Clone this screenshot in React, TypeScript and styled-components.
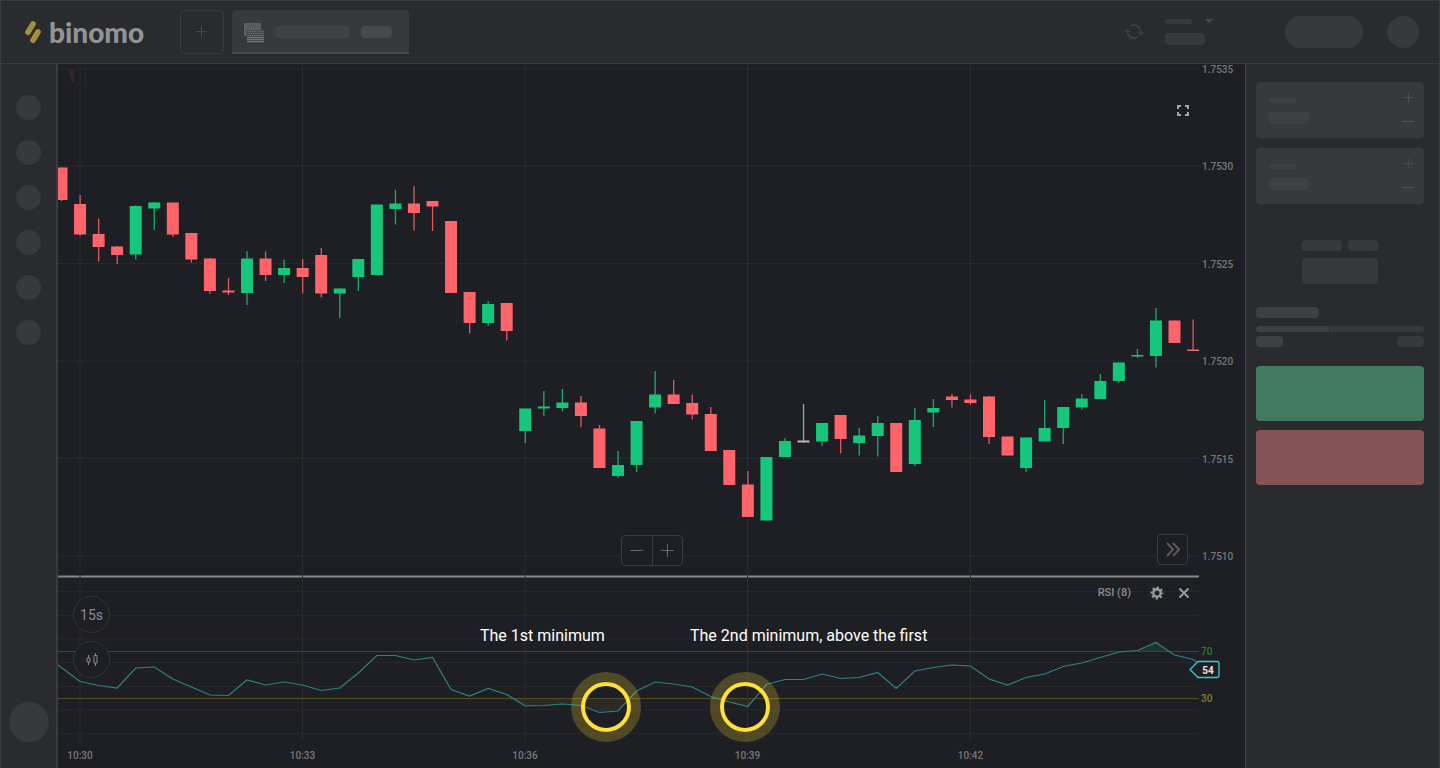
import React from "react";
import styled, { createGlobalStyle } from "styled-components";

const GlobalStyle = createGlobalStyle`
  * { box-sizing: border-box; }
  body { margin: 0; background: #2a2b2f; font-family: Roboto, sans-serif; color: #8b8c90; }
  button { font: inherit; color: inherit; padding: 0; cursor: pointer; }
`;

const line = "#3a3b3e";

const Page = styled.div`
  min-height: 100vh;
  display: flex;
  flex-direction: column;
`;

const Header = styled.header`
  height: 64px;
  flex: none;
  display: flex;
  align-items: center;
  padding: 0 20px 0 24px;
  border: 1px solid ${line};
`;

const Logo = styled.a`
  display: flex;
  align-items: center;
  gap: 8px;
  width: 155px;
  color: #929397;
  text-decoration: none;
  font: 900 28px/32px Lato, sans-serif;
`;

const AddButton = styled.button`
  width: 44px;
  height: 44px;
  display: grid;
  place-items: center;
  background: none;
  border: 1px solid ${line};
  border-radius: 4px;
`;

const AssetTab = styled.button`
  width: 177px;
  height: 44px;
  margin-left: 8px;
  padding: 2px 16px 0 11px;
  display: flex;
  align-items: center;
  background: #38393d;
  border: 0;
  border-bottom: 2px solid #4a4b4f;
  border-radius: 4px 4px 0 0;
`;

const Bar = styled.span<{ w: number; h: number; tone?: string }>`
  display: block;
  width: ${(p) => p.w}px;
  height: ${(p) => p.h}px;
  border-radius: 4px;
  background: ${(p) => p.tone ?? "#38393c"};
`;

const TabBar = styled(Bar)`
  margin-left: 11px;
`;

const HeaderTools = styled.div`
  display: flex;
  align-items: center;
  margin-left: auto;
`;

const PlainButton = styled.button`
  display: grid;
  place-items: center;
  background: none;
  border: 0;
`;

const Account = styled.button`
  display: grid;
  grid-template-columns: 40px 8px;
  gap: 9px 0;
  margin: 0 72px 0 21px;
  background: none;
  border: 0;
`;

const Deposit = styled.button`
  width: 78px;
  height: 32px;
  border: 0;
  border-radius: 16px;
  background: #38393c;
`;

const Avatar = styled.button`
  width: 32px;
  height: 32px;
  margin-left: 24px;
  border: 0;
  border-radius: 50%;
  background: #38393c;
`;

const Body = styled.div`
  flex: 1;
  display: flex;
`;

const Sidebar = styled.nav`
  width: 58px;
  flex: none;
  display: flex;
  flex-direction: column;
  align-items: center;
  gap: 20px;
  padding: 31px 0 26px;
  border-left: 1px solid ${line};
  border-right: 2px solid ${line};
`;

const Dot = styled.button<{ size: number }>`
  width: ${(p) => p.size}px;
  height: ${(p) => p.size}px;
  border: 0;
  border-radius: 50%;
  background: #38393d;
  &:last-child { margin-top: auto; }
`;

const ChartArea = styled.main`
  flex: 1;
  min-width: 0;
  background: #1e1f24;
`;

const ChartBox = styled.div`
  position: relative;
`;

const ChartSvg = styled.svg`
  display: block;
  width: 100%;
  height: auto;
  font-family: Roboto, sans-serif;
`;

const TopTools = styled.div`
  position: absolute;
  top: 40px;
  right: 47px;
  width: 30px;
  display: flex;
  justify-content: center;
`;

const ZoomGroup = styled.div`
  position: absolute;
  left: 50%;
  bottom: 202px;
  display: flex;
  transform: translateX(-50%);
  border: 1px solid ${line};
  border-radius: 4px;
  background: #1e1f24;
`;

const ZoomButton = styled(PlainButton)`
  width: 30px;
  height: 29px;
  & + & { border-left: 1px solid ${line}; }
`;

const SkipButton = styled(PlainButton)`
  position: absolute;
  right: 57px;
  bottom: 203px;
  width: 31px;
  height: 31px;
  border: 1px solid ${line};
  border-radius: 4px;
  background: #1e1f24;
`;

const IndicatorHead = styled.div`
  position: absolute;
  right: 53px;
  bottom: 167px;
  display: flex;
  align-items: center;
  font-size: 11px;
  font-weight: 500;
  line-height: 16px;
`;

const IndicatorButton = styled(PlainButton)`
  width: 16px;
  height: 16px;
  margin-left: 18px;
  & + & { margin-left: 11px; }
`;

const RoundTools = styled.div`
  position: absolute;
  left: 15px;
  bottom: 90px;
  display: grid;
  gap: 8px;
`;

const RoundButton = styled(PlainButton)`
  width: 37px;
  height: 37px;
  border: 1px solid #333438;
  border-radius: 50%;
  background: #1e1f24;
  font-size: 14px;
`;

const Panel = styled.aside`
  width: 195px;
  flex: none;
  display: flex;
  flex-direction: column;
  padding: 18px 15px 18px 10px;
  border-left: 1px solid #434447;
  border-right: 1px solid ${line};
`;

const Card = styled.div`
  height: 56px;
  display: flex;
  justify-content: space-between;
  padding: 9px 9px 10px 13px;
  margin-bottom: 10px;
  border-radius: 4px;
  background: #38393c;
`;

const CardText = styled.div`
  display: grid;
  align-content: center;
  gap: 9px;
  padding-top: 3px;
`;

const Stepper = styled.div`
  display: flex;
  flex-direction: column;
  justify-content: space-between;
`;

const Payout = styled.div`
  display: grid;
  grid-template-columns: 40px 30px;
  gap: 7px 6px;
  justify-content: center;
  margin: 26px 0 23px;
  & > :last-child { grid-column: span 2; }
`;

const Mood = styled.div`
  display: grid;
  gap: 4px 1px;
  grid-template-columns: 73fr 94fr;
  margin: 8px 0 19px;
`;

const MoodPart = styled.span<{ right?: boolean }>`
  height: 6px;
  background: ${(p) => (p.right ? "#38393c" : "#3f4043")};
  border-radius: ${(p) => (p.right ? "0 3px 3px 0" : "3px 0 0 3px")};
`;

const MoodValue = styled(Bar)`
  &:last-child { justify-self: end; }
`;

const TradeButton = styled.button<{ tone: string }>`
  height: 55px;
  margin-bottom: 9px;
  border: 0;
  border-radius: 4px;
  background: ${(p) => p.tone};
`;

const GREEN = "#16c67a";
const RED = "#ff646b";
const GREY = "#b5b6b9";

// Each candle: colour, wick top, body top, body bottom, wick bottom.
type Candle = [string, number, number, number, number];
const candles: Candle[] = [
  [RED, 167.5, 167.5, 200, 201], [RED, 195, 204, 234.5, 235.5], [RED, 218.5, 234, 247, 261.5],
  [RED, 246, 246.5, 255, 264], [GREEN, 205.5, 206, 254.5, 259.5], [GREEN, 202, 202.5, 208.5, 230],
  [RED, 202.5, 202.5, 234.5, 237], [RED, 233, 233, 259.5, 262.5], [RED, 258, 258.5, 291, 294],
  [RED, 278, 290.5, 292.5, 295], [GREEN, 251, 258.5, 293, 305], [RED, 251.5, 258.5, 275, 281],
  [GREEN, 259.5, 268, 275, 283], [RED, 259, 268, 277, 293.5], [RED, 248, 255, 293.5, 297.5],
  [GREEN, 288.5, 288.5, 293.5, 318], [GREEN, 259, 259, 277, 291], [GREEN, 204.5, 204.5, 275, 275],
  [GREEN, 190, 203.5, 209, 224.5], [RED, 186, 203.5, 213, 230.5], [RED, 201, 201, 206.5, 231],
  [RED, 221, 221, 293, 293], [RED, 292, 292, 323, 333.5], [GREEN, 301, 304, 323, 326],
  [RED, 303, 303, 331, 340.5], [GREEN, 408.5, 408.5, 431, 443], [GREEN, 391, 406.5, 408.5, 416],
  [GREEN, 389, 402.5, 408, 411.5], [RED, 396, 402.5, 416, 427], [RED, 425, 428.5, 468, 468],
  [GREEN, 451, 465, 476, 478], [GREEN, 421, 421, 465, 472], [GREEN, 371, 394.5, 407.5, 413.5],
  [RED, 380, 394.5, 404, 404], [RED, 394.5, 403, 414.5, 419.5], [RED, 407, 414, 451, 451],
  [RED, 450, 450, 485, 485], [RED, 471, 484.5, 517, 517], [GREEN, 457, 457, 520.5, 520.5],
  [GREEN, 438, 441, 457, 457], [GREY, 404, 440.5, 442.5, 442.5], [GREEN, 423, 423, 441.5, 446],
  [RED, 415, 415, 439, 453.5], [GREEN, 428, 435.5, 443, 455.5], [GREEN, 416, 423, 436, 456.5],
  [RED, 423, 423, 472, 472], [GREEN, 408, 420, 464, 466], [GREEN, 399, 408, 412.5, 427],
  [RED, 394, 396.5, 400, 407.5], [RED, 394.5, 399.5, 403, 405], [RED, 396, 396.5, 437, 444],
  [RED, 436.5, 436.5, 455.5, 455.5], [GREEN, 437.5, 437.5, 468, 472], [GREEN, 400, 428, 441.5, 441.5],
  [GREEN, 407, 407, 428, 444], [GREEN, 394, 398.5, 407.5, 409.5], [GREEN, 374, 381, 399, 399],
  [GREEN, 362.5, 362.5, 381, 383], [GREEN, 349, 355, 356.5, 358], [GREEN, 308, 320.5, 356, 367.5],
  [RED, 320.5, 320.5, 343, 343], [RED, 319.5, 349.5, 351, 351],
];

const rsi = [
  668, 681.5, 685.5, 688, 668, 667, 679, 687, 695, 695.5, 680, 685, 682, 685, 690.5, 688, 673, 655.5,
  655.5, 660, 657.5, 689.5, 696, 688.5, 694.5, 706, 705.5, 704, 705.5, 712.5, 711, 691, 682, 684, 687,
  696.5, 702, 706.5, 684.5, 679.5, 679.5, 674, 678.5, 677.5, 672.5, 688.5, 671, 667.5, 665, 666, 679,
  685, 677.5, 674, 666.5, 663, 657.5, 652, 650.5, 642.5, 655, 659.5,
];

const STEP = 18.55;
const slot = (i: number) => 61.5 + i * STEP;

const prices: [string, number][] = [
  ["1.7535", 69], ["1.7530", 166], ["1.7525", 263.5], ["1.7520", 361], ["1.7515", 458.5], ["1.7510", 556],
];
const rsiGrid = [591.5, 615.5, 639, 662.5, 686.5, 710, 733.5];
const times: [string, number][] = [
  ["10:30", 80], ["10:33", 302.5], ["10:36", 525], ["10:39", 747.5], ["10:42", 970.5],
];
const minima = [606, 745];

const rsiPoints = ["58,665", ...rsi.slice(1).map((y, i) => `${slot(i + 1)},${y}`), "1197,662"].join(" ");

const Chart = () => (
  <ChartSvg viewBox="58 64 1187 704" role="img" aria-label="Price and RSI chart">
    <defs>
      <clipPath id="overbought"><rect x="58" y="580" width="1141" height="71" /></clipPath>
      <clipPath id="oversold"><rect x="58" y="698" width="1141" height="40" /></clipPath>
    </defs>
    <path d="M58 576.5H1199" stroke="#88898c" strokeWidth="2" />
    {prices.map(([label, y]) => (
      <React.Fragment key={label}>
        <path d={`M58 ${y}H1199`} stroke="#292a2e" />
        <text x="1202" y={y + 4} fontSize="10" fontWeight="500" fill="#77787c">{label}</text>
      </React.Fragment>
    ))}
    {rsiGrid.map((y) => <path key={y} d={`M58 ${y}H1199`} stroke="#26272b" />)}
    {times.map(([label, x]) => (
      <React.Fragment key={label}>
        <path d={`M${x} 64V741`} stroke="#2b2c30" />
        <text x={x} y="759" fontSize="10" fontWeight="500" textAnchor="middle" fill="#77787c">{label}</text>
      </React.Fragment>
    ))}
    <path d="M85.5 64V87" stroke="#292a2e" />
    <path d="M69 70H74V82H72Z" fill="#38232a" />

    {candles.map(([color, high, top, bottom, low], i) => (
      <g key={i} fill={color}>
        <rect x={slot(i) - 0.6} y={high} width="1.3" height={low - high} opacity="0.85" />
        <rect x={slot(i) - 6} y={top} width="12" height={bottom - top} />
      </g>
    ))}

    <path d="M58 651.5H1199" stroke="#20523a" />
    <path d="M58 698.5H1199" stroke="#545024" />
    <polygon points={`58,651 ${rsiPoints} 1197,651`} fill="#1f4a33" opacity="0.5" clipPath="url(#overbought)" />
    <polygon points={`58,698 ${rsiPoints} 1197,698`} fill="#4c4724" opacity="0.3" clipPath="url(#oversold)" />
    <polyline points={rsiPoints} fill="none" stroke="#2b8385" strokeWidth="1.2" />
    <g fontSize="10" fontWeight="500">
      <text x="1201" y="655" fill="#1f8436">70</text>
      <text x="1201" y="702" fill="#85801f">30</text>
    </g>
    <path d="M1190 669.5L1198 661.5H1217a2 2 0 0 1 2 2V675.5a2 2 0 0 1-2 2H1198Z" fill="#1e1f24" stroke="#2ccfd0" strokeWidth="1.3" />
    <text x="1208" y="674" fontSize="10" fontWeight="700" textAnchor="middle" fill="#e4e4e5">54</text>

    {minima.map((x) => (
      <g key={x}>
        <circle cx={x} cy="707" r="30" fill="none" stroke="#ffdd2d" strokeOpacity="0.22" strokeWidth="10" />
        <circle cx={x} cy="707" r="23" fill="none" stroke="#ffdf3a" strokeWidth="4" />
      </g>
    ))}
    <g fontSize="16" fill="#fff">
      <text x="480" y="641">The 1st minimum</text>
      <text x="690" y="641">The 2nd minimum, above the first</text>
    </g>
  </ChartSvg>
);

const Glyph = ({ size, d, color, width = 1 }: { size: number; d: string; color: string; width?: number }) => (
  <svg width={size} height={size} viewBox={`0 0 ${size} ${size}`} fill="none" stroke={color} strokeWidth={width} aria-hidden="true">
    <path d={d} />
  </svg>
);

const StepCard = ({ name, plus }: { name: string; plus: string }) => (
  <Card>
    <CardText>
      <Bar w={27} h={5} tone="#3f4043" />
      <Bar w={40} h={12} tone="#3f4043" />
    </CardText>
    <Stepper>
      <PlainButton aria-label={`Increase ${name}`}><Glyph size={13} d="M6.5 1V12M1 6.5H12" color={plus} /></PlainButton>
      <PlainButton aria-label={`Decrease ${name}`}><Glyph size={13} d="M0 6.5H12" color="#515255" /></PlainButton>
    </Stepper>
  </Card>
);

export default function App() {
  return (
    <Page>
      <GlobalStyle />
      <Header>
        <Logo href="#">
          <svg width="16" height="24" viewBox="0 0 16 24" stroke="#a0903f" strokeWidth="5.6" strokeLinecap="round" aria-hidden="true">
            <path d="M3 12.2L8 4M8 20.2L13 12" />
          </svg>
          binomo
        </Logo>
        <AddButton aria-label="Add asset"><Glyph size={12} d="M5.5 0V11M0 5.5H11" color="#46474b" /></AddButton>
        <AssetTab aria-label="Current asset">
          <svg width="21" height="21" viewBox="0 0 21 21" aria-hidden="true">
            <path d="M1 1H18V14H1Z" fill="#5c5d61" />
            <path d="M5 5Q9 1 13 5" stroke="#46474b" strokeDasharray="2 1" fill="none" />
            <path d="M4 8H21V21H4Z" fill="#48494d" />
            <path d="M12 9.5H21M12 11.5H21M12 13.5H21" stroke="#5c5d61" />
            <path d="M4 15.5H21M4 17.5H21M4 19.5H21" stroke="#737478" />
            <path d="M5 9.5H12M6 11.5H12M5 13.5H12" stroke="#737478" strokeDasharray="1 1" />
          </svg>
          <TabBar w={75} h={12} tone="#414246" />
          <TabBar w={31} h={12} tone="#48494d" />
        </AssetTab>
        <HeaderTools>
          <PlainButton aria-label="Refresh">
            <svg width="20" height="18" viewBox="0 0 20 18" fill="none" stroke="#3d3e41" strokeWidth="2" aria-hidden="true">
              <path d="M3.5 8.5A6.5 6.5 0 0 0 13.5 14.2M6.5 3.2A6.5 6.5 0 0 1 16.5 9.5" />
              <path d="M0 9L3.5 5L7 9ZM13 9L16.5 13L20 9Z" fill="#3d3e41" stroke="none" />
            </svg>
          </PlainButton>
          <Account aria-label="Account">
            <Bar w={27} h={5} />
            <svg width="8" height="5" viewBox="0 0 8 5" aria-hidden="true"><path d="M0 0H8L4 4.5Z" fill="#46474a" /></svg>
            <Bar w={40} h={12} />
          </Account>
          <Deposit aria-label="Deposit" />
          <Avatar aria-label="Profile" />
        </HeaderTools>
      </Header>
      <Body>
        <Sidebar aria-label="Sections">
          {["Trades", "History", "Market", "Tournaments", "Chat", "Education"].map((name) => (
            <Dot key={name} size={25} aria-label={name} />
          ))}
          <Dot size={40} aria-label="Help" />
        </Sidebar>
        <ChartArea>
          <ChartBox>
            <Chart />
            <TopTools>
              <PlainButton aria-label="Full screen">
                <Glyph size={14} d="M2 5V2H5M9 2H12V5M12 8V11H9M5 11H2V8" color="#a5a6a9" width={2} />
              </PlainButton>
            </TopTools>
            <ZoomGroup>
              <ZoomButton aria-label="Zoom out"><Glyph size={13} d="M0 6.5H13" color="#66676b" /></ZoomButton>
              <ZoomButton aria-label="Zoom in"><Glyph size={13} d="M0 6.5H13M6.5 0V13" color="#66676b" /></ZoomButton>
            </ZoomGroup>
            <SkipButton aria-label="Go to latest"><Glyph size={15} d="M2 1L8 7.5L2 14M8 1L14 7.5L8 14" color="#595a5e" width={2} /></SkipButton>
            <IndicatorHead>
              RSI (8)
              <IndicatorButton aria-label="Indicator settings">
                <svg width="14" height="14" viewBox="0 0 14 14" fill="none" stroke="#9a9b9e" aria-hidden="true">
                  <circle cx="7" cy="7" r="3.7" strokeWidth="2.4" />
                  <circle cx="7" cy="7" r="5.5" strokeWidth="2" strokeDasharray="2.16 2.16" strokeDashoffset="1.08" />
                </svg>
              </IndicatorButton>
              <IndicatorButton aria-label="Remove indicator"><Glyph size={12} d="M1.5 1.5L10.5 10.5M10.5 1.5L1.5 10.5" color="#9a9b9e" width={2} /></IndicatorButton>
            </IndicatorHead>
            <RoundTools>
              <RoundButton>15s</RoundButton>
              <RoundButton aria-label="Chart type"><Glyph size={14} d="M3.5 2V5M3.5 9V12M2 5H5V9H2ZM10.5 0V2.500M10.5 10V13M9 2.500H12V10H9Z" color="#85868a" /></RoundButton>
            </RoundTools>
          </ChartBox>
        </ChartArea>
        <Panel>
          <StepCard name="amount" plus="#4b4c4f" />
          <StepCard name="duration" plus="#454649" />
          <Payout>
            <Bar w={40} h={11} />
            <Bar w={30} h={11} />
            <Bar w={76} h={26} />
          </Payout>
          <Bar w={63} h={11} tone="#3f4043" />
          <Mood>
            <MoodPart />
            <MoodPart right />
            <MoodValue w={27} h={11} tone="#3f4043" />
            <MoodValue w={27} h={11} />
          </Mood>
          <TradeButton tone="#427a60" aria-label="Up" />
          <TradeButton tone="#855255" aria-label="Down" />
        </Panel>
      </Body>
    </Page>
  );
}
